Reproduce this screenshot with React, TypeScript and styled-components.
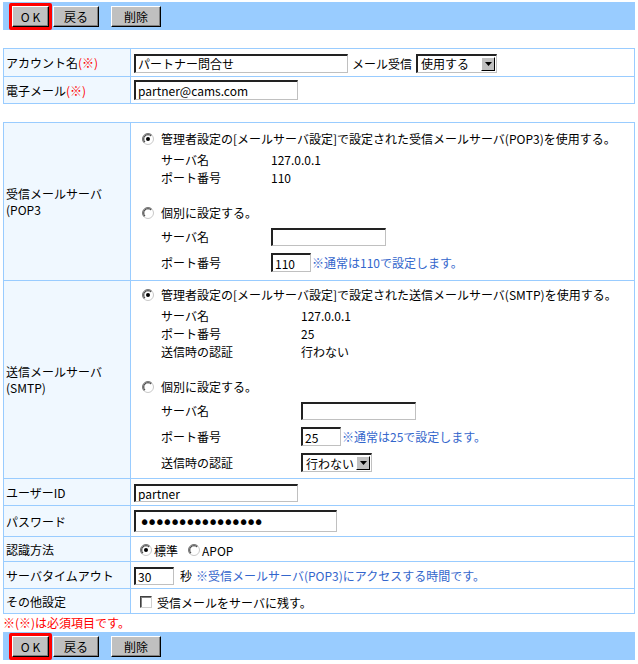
import React from 'react'
import styled, { createGlobalStyle } from 'styled-components'

const GlobalStyle = createGlobalStyle`
	body {
		margin: 0;
		background: #fff;
		color: #000;
		font-family: "Noto Sans CJK JP", "Noto Sans", sans-serif;
		font-size: 12px;
	}
`

/**
 * Mail account edit form (POP3 / SMTP settings) with a button bar on top and bottom.
 */

const Radio: React.FC<{ checked?: boolean }> = ({ checked }) => (
	<RadioIcon width="12" height="12" viewBox="0 0 12 12">
		<circle cx="6" cy="6" r="5.5" fill="#fff" stroke="#c8c8c8" />
		<path d="M2.2 9.8 A5.3 5.3 0 0 1 9.8 2.2" fill="none" stroke="#6a6a6a" />
		<path d="M3 9 A4.2 4.2 0 0 1 9 3" fill="none" stroke="#303030" />
		{checked && <circle cx="6" cy="6" r="2" fill="#000" />}
	</RadioIcon>
)

const Select: React.FC<{ value: string; width: number; ml?: number }> = ({ value, width, ml }) => (
	<SelectBox $w={width} $ml={ml ?? 0}>
		<span>{value}</span>
		<SelectArrow>
			<svg width="7" height="4" viewBox="0 0 7 4">
				<path d="M0 0 H7 L3.5 4 Z" fill="#000" />
			</svg>
		</SelectArrow>
	</SelectBox>
)

const Buttons: React.FC = () => (
	<ButtonBar>
		<FocusFrame>
			<Button $w={37}>O K</Button>
		</FocusFrame>
		<Button $w={46} $ml={1}>戻る</Button>
		<Button $w={50} $ml={12}>削除</Button>
	</ButtonBar>
)

const App: React.FC = () => {
	return (
		<Page>
			<GlobalStyle />
			<Buttons />

			<Table $mt={18}>
				<colgroup>
					<col style={{ width: 127 }} />
					<col />
				</colgroup>
				<tbody>
					<Row $h={28}>
						<Label>アカウント名<Req>(※)</Req></Label>
						<Value>
							<TextInput $w={214} defaultValue="パートナー問合せ" />
							<InlineText>メール受信</InlineText>
							<Select value="使用する" width={81} ml={4} />
						</Value>
					</Row>
					<Row $h={27}>
						<Label>電子メール<Req>(※)</Req></Label>
						<Value>
							<TextInput $w={164} $hh={20} defaultValue="partner@cams.com" />
						</Value>
					</Row>
				</tbody>
			</Table>

			<Table $mt={18}>
				<colgroup>
					<col style={{ width: 127 }} />
					<col />
				</colgroup>
				<tbody>
					<Row $h={158}>
						<Label $lh={16}>受信メールサーバ<br />(POP3</Label>
						<Value>
							<ServerBox>
								<RadioLine>
									<Radio checked />
									管理者設定の[メールサーバ設定]で設定された受信メールサーバ(POP3)を使用する。
								</RadioLine>
								<InfoGrid $col={110}>
									<span>サーバ名</span><span>127.0.0.1</span>
									<span>ポート番号</span><span>110</span>
								</InfoGrid>
								<RadioLine $mt={16}>
									<Radio />
									個別に設定する。
								</RadioLine>
								<FormGrid $col={110}>
									<span>サーバ名</span>
									<span><TextInput $w={115} $hh={18} /></span>
									<span>ポート番号</span>
									<span>
										<TextInput $w={40} defaultValue="110" />
										<Note>※通常は110で設定します。</Note>
									</span>
								</FormGrid>
							</ServerBox>
						</Value>
					</Row>
					<Row $h={198}>
						<Label $lh={16}>送信メールサーバ<br />(SMTP)</Label>
						<Value>
							<ServerBox>
								<RadioLine>
									<Radio checked />
									管理者設定の[メールサーバ設定]で設定された送信メールサーバ(SMTP)を使用する。
								</RadioLine>
								<InfoGrid $col={140}>
									<span>サーバ名</span><span>127.0.0.1</span>
									<span>ポート番号</span><span>25</span>
									<span>送信時の認証</span><span>行わない</span>
								</InfoGrid>
								<RadioLine $mt={16}>
									<Radio />
									個別に設定する。
								</RadioLine>
								<FormGrid $col={140}>
									<span>サーバ名</span>
									<span><TextInput $w={115} $hh={18} /></span>
									<span>ポート番号</span>
									<span>
										<TextInput $w={40} defaultValue="25" />
										<Note>※通常は25で設定します。</Note>
									</span>
									<span>送信時の認証</span>
									<span><Select value="行わない" width={71} /></span>
								</FormGrid>
							</ServerBox>
						</Value>
					</Row>
					<Row $h={27}>
						<Label>ユーザーID</Label>
						<Value>
							<TextInput $w={164} $hh={18} defaultValue="partner" />
						</Value>
					</Row>
					<Row $h={31}>
						<Label>パスワード</Label>
						<Value>
							<PasswordInput type="password" defaultValue="xxxxxxxxxxxxxxxx" />
						</Value>
					</Row>
					<Row $h={25}>
						<Label>認識方法</Label>
						<Value>
							<Choice $ml={6}><Radio checked />標準</Choice>
							<Choice $ml={10}><Radio />APOP</Choice>
						</Value>
					</Row>
					<Row $h={27}>
						<Label>サーバタイムアウト</Label>
						<Value>
							<TextInput $w={40} $hh={18} defaultValue="30" />
							<InlineText $ml={6}>秒</InlineText>
							<Note $ml={4}>※受信メールサーバ(POP3)にアクセスする時間です。</Note>
						</Value>
					</Row>
					<Row $h={25}>
						<Label>その他設定</Label>
						<Value>
							<Choice $ml={6}><CheckBox />受信メールをサーバに残す。</Choice>
						</Value>
					</Row>
				</tbody>
			</Table>

			<RequiredNote>※(※)は必須項目です。</RequiredNote>
			<Buttons />
		</Page>
	)
}

const Page = styled.div`
	width: 632px;
	padding: 2px 3px 0;
`

const ButtonBar = styled.div`
	height: 28px;
	box-sizing: border-box;
	padding: 1px 0 0 6px;
	background: #99ccff;
	display: flex;
	align-items: center;
`

const FocusFrame = styled.div`
	border: 3px solid #ff0000;
	border-radius: 2px;
	display: flex;
`

const Button = styled.button<{ $w: number; $ml?: number }>`
	width: ${(p) => p.$w}px;
	height: 21px;
	margin: 0 0 0 ${(p) => p.$ml ?? 0}px;
	padding: 0;
	background: #c0c0c0;
	border: 1px solid;
	border-color: #fff #000 #000 #fff;
	box-shadow: inset -1px -1px #808080;
	font-family: "Noto Sans CJK JP", sans-serif;
	font-size: 12px;
	color: #000;
	line-height: 18px;
`

const Table = styled.table<{ $mt: number }>`
	width: 632px;
	margin-top: ${(p) => p.$mt}px;
	border-collapse: collapse;
	table-layout: fixed;
`

const Row = styled.tr<{ $h: number }>`
	height: ${(p) => p.$h}px;
`

const Label = styled.td<{ $lh?: number }>`
	background: #f0f8ff;
	border: 1px solid #99ccff;
	padding: 0 2px;
	vertical-align: middle;
	line-height: ${(p) => (p.$lh ? `${p.$lh}px` : 'normal')};
	white-space: nowrap;
`

const Value = styled.td`
	border: 1px solid #99ccff;
	padding: 0 3px;
	vertical-align: middle;
	white-space: nowrap;
`

const Req = styled.span`
	color: #ff0000;
`

const TextInput = styled.input<{ $w: number; $hh?: number }>`
	width: ${(p) => p.$w}px;
	height: ${(p) => p.$hh ?? 19}px;
	box-sizing: border-box;
	margin: 0;
	padding: 0 2px;
	border-style: solid;
	border-width: 2px 1px 1px 2px;
	border-color: #222 #c0c0c0 #c0c0c0 #222;
	font-family: "Noto Sans CJK JP", sans-serif;
	font-size: 12px;
	color: #000;
	vertical-align: middle;
	outline: none;
`

const PasswordInput = styled(TextInput).attrs({ $w: 203, $hh: 22 })`
	font-family: "DejaVu Sans", sans-serif;
	font-size: 19px;
	letter-spacing: -3.6px;
	padding-left: 3px;
`

const InlineText = styled.span<{ $ml?: number }>`
	margin-left: ${(p) => p.$ml ?? 4}px;
	vertical-align: middle;
`

const SelectBox = styled.span<{ $w: number; $ml: number }>`
	display: inline-flex;
	align-items: center;
	justify-content: space-between;
	width: ${(p) => p.$w}px;
	height: 19px;
	box-sizing: border-box;
	margin-left: ${(p) => p.$ml}px;
	padding: 0 1px 0 3px;
	border-style: solid;
	border-width: 2px 1px 1px 2px;
	border-color: #222 #c0c0c0 #c0c0c0 #222;
	background: #fff;
	vertical-align: middle;
`

const SelectArrow = styled.span`
	width: 14px;
	height: 14px;
	box-sizing: border-box;
	display: flex;
	align-items: center;
	justify-content: center;
	background: #c0c0c0;
	border: 1px solid;
	border-color: #fff #000 #000 #fff;
`

const ServerBox = styled.div`
	display: flex;
	flex-direction: column;
	padding: 3px 0 2px 8px;
`

const RadioIcon = styled.svg`
	flex: none;
	margin-right: 7px;
`

const RadioLine = styled.div<{ $mt?: number }>`
	display: flex;
	align-items: center;
	height: 20px;
	margin-top: ${(p) => p.$mt ?? 0}px;
`

const InfoGrid = styled.div<{ $col: number }>`
	display: grid;
	grid-template-columns: ${(p) => p.$col}px auto;
	grid-auto-rows: 18px;
	align-items: center;
	margin-top: 2px;
	padding-left: 19px;
`

const FormGrid = styled(InfoGrid)`
	grid-auto-rows: 26px;
	margin-top: 1px;
	& > span {
		display: flex;
		align-items: center;
	}
`

const Note = styled.span<{ $ml?: number }>`
	color: #3366cc;
	margin-left: ${(p) => p.$ml ?? 1}px;
	vertical-align: middle;
`

const Choice = styled.label<{ $ml: number }>`
	display: inline-flex;
	align-items: center;
	margin-left: ${(p) => p.$ml}px;
	vertical-align: middle;
	& > svg {
		margin-right: 2px;
	}
`

const CheckBox = styled.span`
	width: 12px;
	height: 12px;
	box-sizing: border-box;
	margin-right: 5px;
	background: #fff;
	border-style: solid;
	border-width: 1px;
	border-color: #404040 #d0d0d0 #d0d0d0 #404040;
	box-shadow: inset 1px 1px #808080;
`

const RequiredNote = styled.div`
	color: #ff0000;
	height: 18px;
	line-height: 18px;
`

export default App
